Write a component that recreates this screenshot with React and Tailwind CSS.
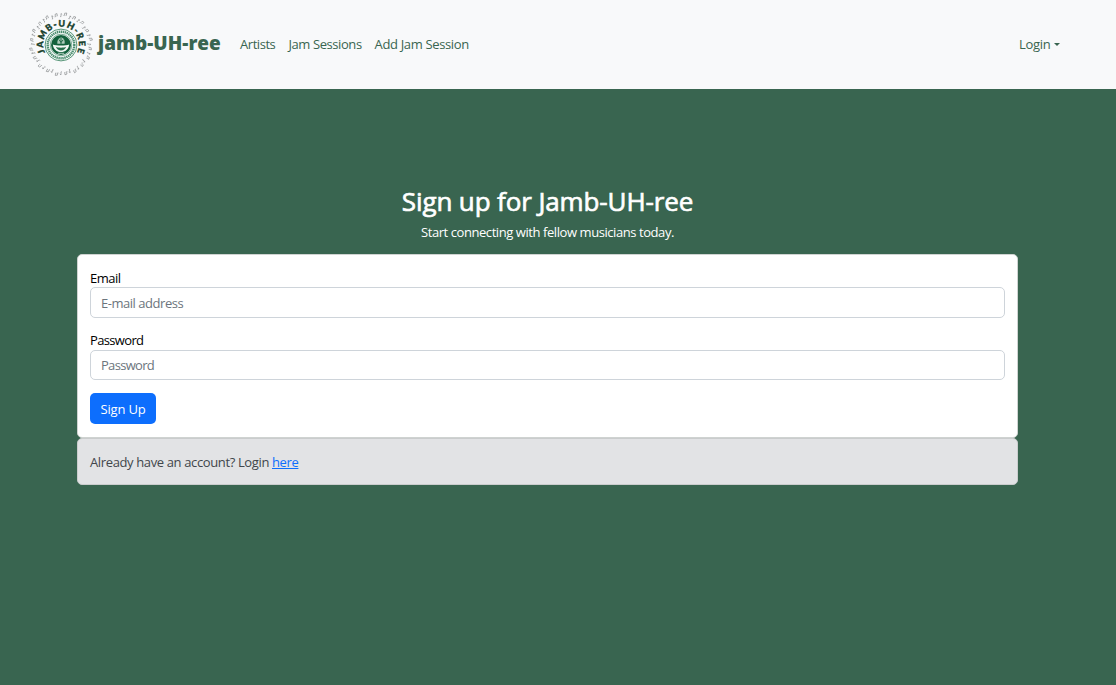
import React from "react";

const NOTE_COUNT = 40;

function NoteRing() {
  return Array.from({ length: NOTE_COUNT }, (_, i) => {
    const lift = [0, -1.1, 0.9, -0.3][i % 4];
    return (
      <g key={i} transform={`rotate(${(i * 360) / NOTE_COUNT} 32 32.2) translate(32 ${2.9 + lift})`}>
        <path
          d={i % 2 ? "M-1.2 1.5V-.8L.8 -1.3V1M-2 1.6h.9M0 1.1h.9" : "M0 1.6V-1.4l1.2 1M-.9 1.7h1"}
          fill="none"
          stroke="#6a6e70"
          strokeWidth="0.5"
        />
      </g>
    );
  });
}

function Logo() {
  return (
    <svg width="64" height="64" viewBox="0 0 64 64" className="mb-[1px] block shrink-0 overflow-visible" aria-label="jamb-UH-ree logo">
      <defs>
        <path id="nameRing" d="M16.1 40.5A17.8 17.8 0 1 1 47.9 40.5" />
      </defs>
      <NoteRing />
      <text fontSize="9" fontWeight="900" fill="#17402c" stroke="#17402c" strokeWidth="0.35" fontFamily="Lato, sans-serif">
        <textPath href="#nameRing" startOffset="0.3" textLength="71.5" lengthAdjust="spacing">JAMB-UH-REE</textPath>
      </text>
      <g transform="translate(32 33)">
        <circle r="15.9" fill="#f8fbfa" stroke="#2d7a55" strokeWidth="0.8" />
        <circle r="13.3" fill="none" stroke="#4b8d6f" strokeWidth="2.4" strokeDasharray="1.4 0.6" />
        <circle r="10.8" fill="#f8fbfa" stroke="#2d7a55" strokeWidth="0.6" />
        <circle r="10" fill="#12613c" />
        <path d="M-8.2 -.6C-5 .8 5 .8 8.2 -.6 7.6 4.2 4.4 7 0 7S-7.6 4.2 -8.2 -.6Z" fill="#f1f7f4" />
        <path d="M-5.2 1.8C-3 3 3 3 5.2 1.8 4.4 4.2 2.4 5.4 0 5.4S-4.4 4.2 -5.2 1.8Z" fill="#24704b" />
        <path d="M-3.6 -1.2C-4.2 -4.4 -2.2 -7.4 .2 -7.6 2.8 -7.2 4.2 -4.6 3.6 -1.2Z" fill="#a9c8b8" />
        <path d="M-2 -5.4L0 -2.6 2.2 -5.2M0 -7V-1" fill="none" stroke="#12613c" strokeWidth="0.9" />
        <path d="M-3.2 8.3h6.4" stroke="#d9e8e0" strokeWidth="0.8" />
      </g>
    </svg>
  );
}

function Field({ label, type, placeholder, labelClass, inputClass }) {
  return (
    <label className="block">
      <span className={"block h-[18px] text-[13px] leading-[19px] text-black " + labelClass}>{label}</span>
      <input
        type={type}
        placeholder={placeholder}
        className={
          "block w-full rounded-[5px] border border-[#ced4da] bg-white px-[10px] text-[13px] text-[#212529] outline-none placeholder:text-[#6c757d] " +
          inputClass
        }
      />
    </label>
  );
}

export default function App() {
  return (
    <div className="flex h-[685px] w-full flex-col overflow-hidden bg-[#396550] font-['Open_Sans','Noto_Sans',sans-serif] text-[13px]">
      <header className="flex h-[89px] shrink-0 items-center bg-[#f8f9fa] pl-[29px] pr-[56px] text-[#396550]">
        <Logo />
        <a className="ml-[5px] block w-[135px] whitespace-nowrap pb-[4px] text-[19px] font-extrabold leading-[24px] tracking-[0.02px]">jamb-UH-ree</a>
        <nav className="ml-[7px] flex flex-1 whitespace-nowrap pb-[2px] leading-[20px]">
          <a className="w-[48.5px] tracking-[-0.45px]">Artists</a>
          <a className="w-[86px] tracking-[-0.42px]">Jam Sessions</a>
          <a className="tracking-[-0.34px]">Add Jam Session</a>
        </nav>
        <button className="flex items-center pb-[2px] leading-[20px] tracking-[-0.3px]">
          <span className="w-[35px] text-left">Login</span>
          <svg width="6" height="3" viewBox="0 0 6 3" className="mt-[2px] block">
            <path d="M0 0h6L3 3Z" fill="currentColor" />
          </svg>
        </button>
      </header>
      <main className="ml-[77px] flex w-[941px] flex-col pt-[96px]">
        <h2 className="whitespace-nowrap text-center text-[26px] font-medium leading-[32px] tracking-[-0.12px] text-white [-webkit-text-stroke:0.65px_white]">Sign up for Jamb-UH-ree</h2>
        <p className="mt-[5px] h-[32px] text-center leading-[20px] tracking-[-0.43px] text-white">Start connecting with fellow musicians today.</p>
        <form className="h-[184px] rounded-[5px] border border-[#cfd3d1] bg-white px-[12px] pt-[14px]">
          <Field label="Email" type="email" placeholder="E-mail address" labelClass="tracking-[-0.5px]" inputClass="h-[31px] tracking-[-0.47px]" />
          <div className="h-[13px]" />
          <Field label="Password" type="password" placeholder="Password" labelClass="tracking-[-0.65px]" inputClass="mt-[1px] h-[30px] tracking-[-0.7px]" />
          <button type="button" className="mt-[13px] block h-[31px] w-[66px] rounded-[5px] bg-[#0d6efd] pt-[2px] text-center tracking-[-0.2px] text-white">Sign Up</button>
        </form>
        <div className="h-[47px] rounded-[5px] border border-[#cacccd] bg-[#e2e3e5] px-[12px] pt-[13px] leading-[20px] tracking-[-0.37px] text-[#41464b]">
          Already have an account? Login <a className="text-[#0d6efd] underline">here</a>
        </div>
      </main>
    </div>
  );
}
